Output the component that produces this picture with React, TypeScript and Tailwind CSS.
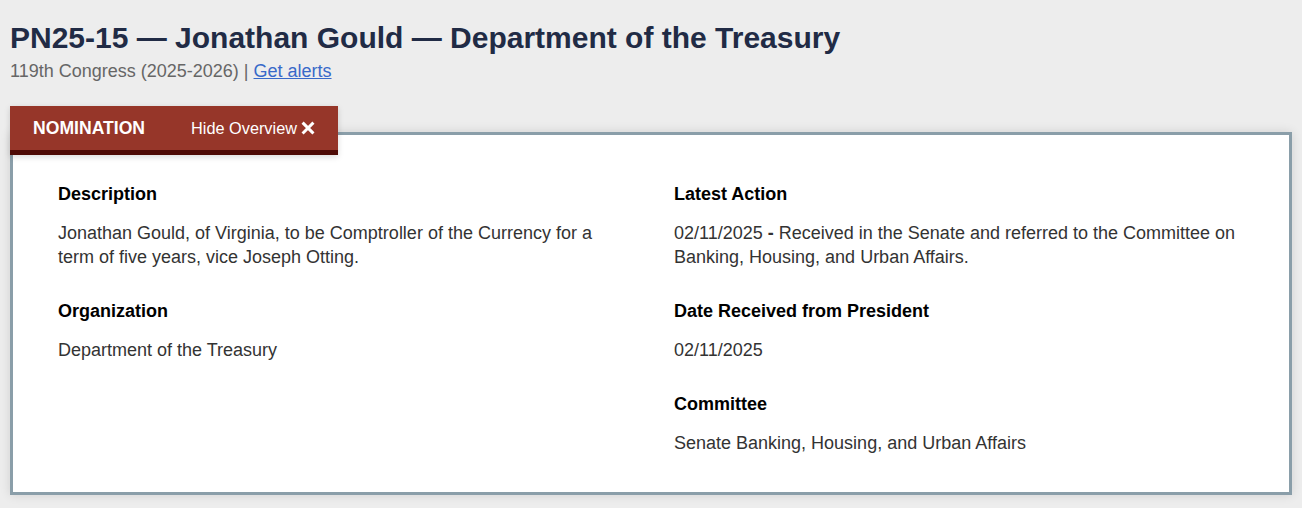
export default function App() {
  return (
    <div className="min-h-[508px] bg-[#ededed] px-[10px] pt-[20px] pb-[13px] font-['Liberation_Sans',Arial,sans-serif]">
      {/* Heading */}
      <h1 className="text-[30px] font-bold leading-[36px] text-[#212b45]">
        PN25-15 — Jonathan Gould — Department of the Treasury
      </h1>
      <p className="mt-[3px] text-[18px] leading-[24px] text-[#666]">
        119th Congress (2025-2026) |{' '}
        <a href="#" className="text-[#3869c9] underline">Get alerts</a>
      </p>

      {/* Tab */}
      <div className="relative z-10 mt-[23px] flex h-[49px] w-[328px] items-center border-b-[5px] border-[#4e0b06] bg-[#963629] pl-[23px] text-white shadow-[0_2px_6px_rgba(0,0,0,0.15)]">
        <span className="text-[17.6px] font-bold">NOMINATION</span>
        <span className="ml-[46px] text-[16.3px]">Hide Overview</span>
        <svg viewBox="0 0 16 16" className="ml-[4px] h-[14px] w-[14px]" aria-hidden="true">
          <path d="M3 3 L13 13 M13 3 L3 13" stroke="white" strokeWidth="3.4" strokeLinecap="square" />
        </svg>
      </div>

      {/* Overview panel */}
      <div className="-mt-[23px] border-[3px] border-[#8a9ea9] bg-white px-[45px] pt-[47px] pb-[37px] shadow-[0_0_10px_rgba(0,0,0,0.12)]">
        <div className="grid grid-cols-2 gap-x-[46px] text-[18px] leading-[24px]">
          <div>
            <h3 className="font-bold text-black">Description</h3>
            <p className="mt-[15px] text-[#333]">
              Jonathan Gould, of Virginia, to be Comptroller of the Currency for a term of five years, vice Joseph Otting.
            </p>
            <h3 className="mt-[30px] font-bold text-black">Organization</h3>
            <p className="mt-[15px] text-[#333]">Department of the Treasury</p>
          </div>
          <div>
            <h3 className="font-bold text-black">Latest Action</h3>
            <p className="mt-[15px] text-[#333]">
              02/11/2025 <b>-</b> Received in the Senate and referred to the Committee on Banking, Housing, and Urban Affairs.
            </p>
            <h3 className="mt-[30px] font-bold text-black">Date Received from President</h3>
            <p className="mt-[15px] text-[#333]">02/11/2025</p>
            <h3 className="mt-[30px] font-bold text-black">Committee</h3>
            <p className="mt-[15px] text-[#333]">Senate Banking, Housing, and Urban Affairs</p>
          </div>
        </div>
      </div>
    </div>
  );
}
